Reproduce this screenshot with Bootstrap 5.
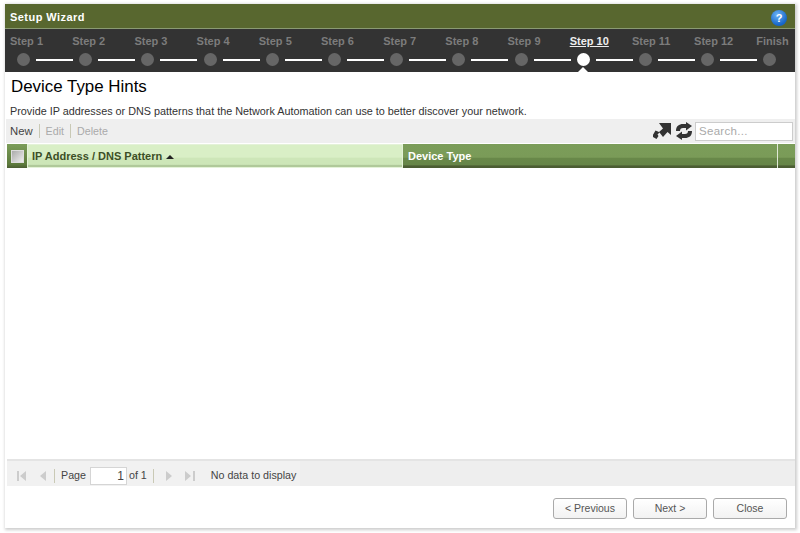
<!DOCTYPE html>
<html lang="en">
<head>
<meta charset="utf-8">
<title>Setup Wizard</title>
<link href="https://cdn.jsdelivr.net/npm/bootstrap@5.3.0/dist/css/bootstrap.min.css" rel="stylesheet">
<style>
html,body{height:533px;overflow:hidden;background:#fff;}
body{font-family:"Liberation Sans",Arial,sans-serif;font-size:11px;color:#444;padding:4px 4px 4px 5px;}
.wiz{width:790px;height:524px;box-shadow:1px 1px 3px 1px #ccc;background:#fff;}
.wiz-title{height:25px;background:#58672f;border-bottom:1px solid #8a9a72;color:#fff;font-weight:700;font-size:11px;padding:3px 8px 0 5px;letter-spacing:.45px;}
.help-ic{width:16px;height:16px;border-radius:50%;background:radial-gradient(circle at 40% 30%,#6db4f5,#1565c8 70%);color:#fff;font-size:11px;font-weight:700;line-height:16px;text-align:center;letter-spacing:0;}
.steps{height:43px;background:#333;position:relative;padding-top:5px;}
.lbls{display:grid;grid-template-columns:repeat(13,62.2px);padding-left:5px;font-size:11px;font-weight:700;color:#7c7c7c;line-height:14px;}
.lbls .cur{color:#eee;text-decoration:underline;}
.track{padding-left:12px;margin-top:5px;gap:6.1px;}
.dot{width:13px;height:13px;border-radius:50%;background:#666;flex:none;}
.dot.cur{background:#fff;}
.ln{width:37px;height:2px;background:#fff;flex:none;}
.tip{position:absolute;left:573px;bottom:0;width:0;height:0;border:5px solid transparent;border-top:0;border-bottom-color:#fff;}
.hd{font-size:16.9px;color:#000;line-height:20px;margin:5px 0 0 6px;}
.desc{font-size:10.82px;color:#333;line-height:13px;margin:8px 0 0 5px;}
.tbar{height:24px;background:#efefef;margin:1px 0 0 1px;padding-right:2px;}
.tbar .acts{padding-left:4px;font-size:11.3px;}
.off{color:#aaa;}
.sep{width:1px;height:14px;background:#c9c9b5;margin:0 6px;}
.tbar .off{font-size:10.7px;}
.sep.wide{margin-right:10px;}
.srch{width:98px;height:19px;border:1px solid #ccc;background:#fff;color:#aaa;font-size:11.5px;line-height:17px;padding-left:3px;letter-spacing:.3px;margin-left:2px;}
.ghd{height:24px;margin:1px 0 0 2px;font-weight:700;font-size:11px;color:#fff;background:linear-gradient(#7b9d59 0,#7a9b58 55%,#688849 60%,#668548 86%,#4b5d33 92%,#4b5d33 100%);}
.g-chk{width:20px;flex:none;background:linear-gradient(#7b9d59,#5d7a3c 85%,#4b5d33);}
.g-box{width:13px;height:13px;background:linear-gradient(135deg,#aaa,#eee);border:1px solid #ddd;}
.g-sort{width:376px;flex:none;background:linear-gradient(#d9efc6 0,#d9efc6 55%,#cde6b8 60%,#cde6b8 88%,#b0c99a 92%);border:1px solid #e4f2d8;color:#3d4f27;padding:1px 0 0 4px;}
.g-type{width:375px;flex:none;border-right:1px solid #dfe8d5;padding:1px 0 0 5px;}
.arr{display:inline-block;width:0;height:0;border:4px solid transparent;border-top:0;border-bottom:4px solid #222;margin-left:4px;vertical-align:0;}
.gbody{height:291px;}
.pwrap{background:#eee;border-top:2px solid #e4e4e4;height:27px;margin-left:2px;}
.pager{width:293px;height:25px;background:#f1f1f1;padding-left:9px;font-size:10.7px;padding-top:4px;white-space:nowrap;}
.pager svg{flex:none;}
.pg-in{width:37px;height:18px;background:#fff;border:1px solid #d5d5d5;text-align:right;padding-right:2px;line-height:17px;margin:0 2px 0 4px;font-size:12px;}
.pager .msg{margin-left:15px;}
.foot{padding:12px 8px 0 0;gap:6px;}
.wbtn{width:74px;height:21px;border:1px solid #aaa;border-radius:3px;background:linear-gradient(#fff,#f2f2f2);padding:0;font-size:10.5px;color:#555;line-height:19px;}
</style>
</head>
<body>
<div class="wiz d-flex flex-column">
  <div class="wiz-title d-flex align-items-center justify-content-between">
    <span>Setup Wizard</span><span class="help-ic">?</span>
  </div>
  <div class="steps">
    <div class="lbls"><span>Step 1</span><span>Step 2</span><span>Step 3</span><span>Step 4</span><span>Step 5</span><span>Step 6</span><span>Step 7</span><span>Step 8</span><span>Step 9</span><span class="cur">Step 10</span><span>Step 11</span><span>Step 12</span><span>Finish</span></div>
    <div class="track d-flex align-items-center">
      <i class="dot"></i><i class="ln"></i><i class="dot"></i><i class="ln"></i><i class="dot"></i><i class="ln"></i><i class="dot"></i><i class="ln"></i><i class="dot"></i><i class="ln"></i><i class="dot"></i><i class="ln"></i><i class="dot"></i><i class="ln"></i><i class="dot"></i><i class="ln"></i><i class="dot"></i><i class="ln"></i><i class="dot cur"></i><i class="ln"></i><i class="dot"></i><i class="ln"></i><i class="dot"></i><i class="ln"></i><i class="dot"></i>
    </div>
    <i class="tip"></i>
  </div>
  <div class="hd">Device Type Hints</div>
  <div class="desc">Provide IP addresses or DNS patterns that the Network Automation can use to better discover your network.</div>
  <div class="tbar d-flex align-items-center justify-content-between">
    <div class="acts d-flex align-items-center"><span>New</span><i class="sep"></i><span class="off">Edit</span><i class="sep"></i><span class="off">Delete</span></div>
    <div class="d-flex align-items-center">
      <svg width="18" height="18" viewBox="0 0 18 18"><path d="M6 1h12v12l-3.500-3-4.500 5-3.500-4.500-2 2 1 1.500-2 3-4.500-2.500 3.500-6 3.500 1.500 4-3.500z" fill="#333"/></svg>
      <svg width="18" height="18" viewBox="0 0 18 18" class="ms-1"><path d="M1 9C1 4 4 2 8 2h3V0l6 4-6 4.500V6H8C6 6 5 7 5 9z" fill="#333"/><path d="M17 9c0 5-3 7-7 7H7v2l-6-4 6-4.500V12h3c2 0 3-1 3-3z" fill="#333"/></svg>
      <div class="srch">Search...</div>
    </div>
  </div>
  <div class="ghd d-flex">
    <div class="g-chk d-flex align-items-center justify-content-center"><i class="g-box"></i></div>
    <div class="g-sort d-flex align-items-center"><span>IP Address / DNS Pattern</span><i class="arr"></i></div>
    <div class="g-type d-flex align-items-center">Device Type</div>
  </div>
  <div class="gbody"></div>
  <div class="pwrap">
    <div class="pager d-flex align-items-center">
      <svg width="14" height="12" viewBox="0 0 14 12"><path d="M1 1h2v10H1zM10 1v10L4 6z" fill="#ccc"/></svg>
      <svg width="10" height="12" viewBox="0 0 10 12" class="ms-2"><path d="M8 1v10L2 6z" fill="#ccc"/></svg>
      <i class="sep"></i><span>Page</span><span class="pg-in">1</span><span>of 1</span><i class="sep wide"></i>
      <svg width="10" height="12" viewBox="0 0 10 12"><path d="M2 1v10l6-5z" fill="#ccc"/></svg>
      <svg width="14" height="12" viewBox="0 0 14 12" class="ms-2"><path d="M3 1v10l6-5zM11 1h2v10h-2z" fill="#ccc"/></svg>
      <span class="msg">No data to display</span>
    </div>
  </div>
  <div class="foot d-flex justify-content-end">
    <button class="wbtn" type="button">&lt; Previous</button>
    <button class="wbtn" type="button">Next &gt;</button>
    <button class="wbtn" type="button">Close</button>
  </div>
</div>
<script src="https://cdn.jsdelivr.net/npm/bootstrap@5.3.0/dist/js/bootstrap.bundle.min.js"></script>
</body>
</html>
